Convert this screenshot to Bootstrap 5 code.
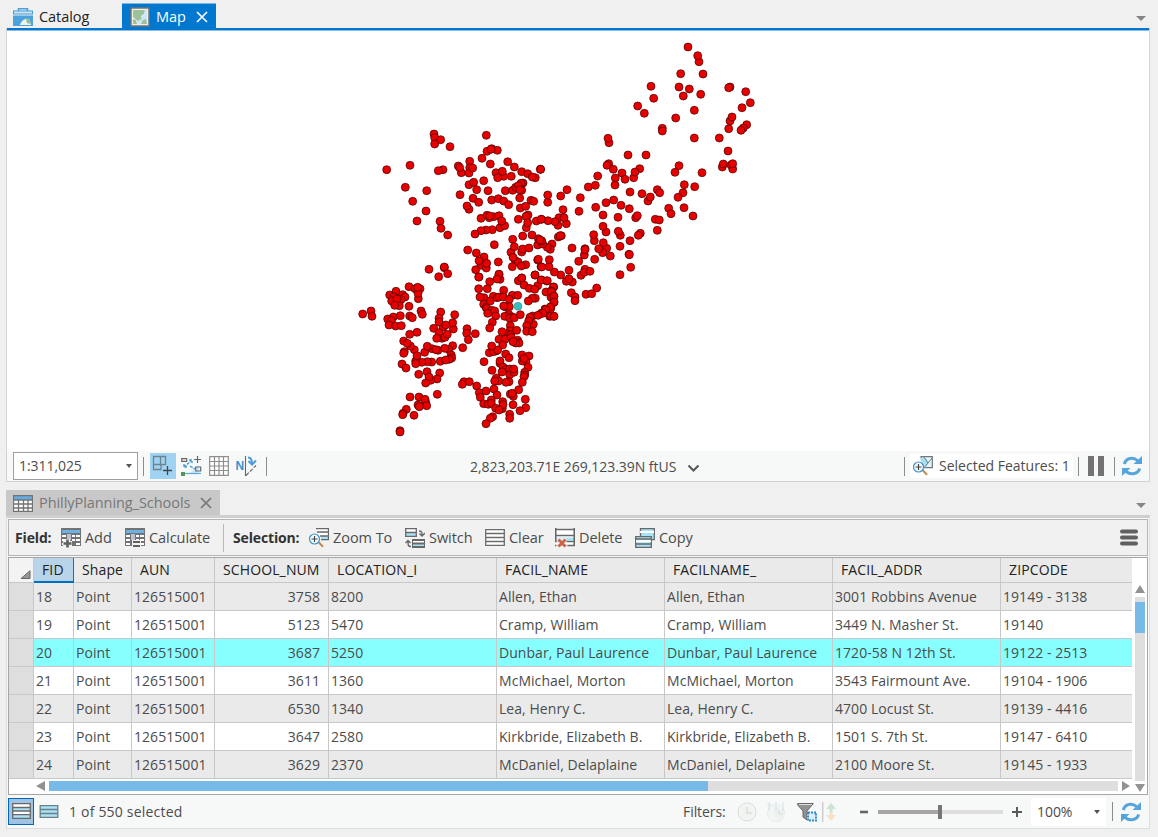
<!DOCTYPE html>
<html lang="en">
<head>
<meta charset="utf-8">
<meta name="viewport" content="width=device-width, initial-scale=1">
<title>Map</title>
<link href="https://cdn.jsdelivr.net/npm/bootstrap@5.3.0/dist/css/bootstrap.min.css" rel="stylesheet">
<style>
body{width:1158px;height:837px;overflow:hidden;background:#f0f0f0;color:#4c4c4c;font:14px/20px "Open Sans","Noto Sans",sans-serif;letter-spacing:-.06px;white-space:nowrap}
svg{display:block;flex:none}
.view{margin:0 8px 0 6px}
.tabs{height:28px;padding-top:3px}
.doc-tab{height:25px;font-size:14.5px;gap:6px;padding-top:2px}
.cat-tab{width:116px;padding-left:7px;color:#222}
.map-tab{width:94px;padding-left:8px;background:#0078d0;color:#fff;border-top:1px solid #7ab8e6}
.tabs .caret{margin:5px 4px 0 auto}
.map-area{height:454px;border:1px solid #d0d2d3;border-top:0;background:#fff;padding-top:3px;box-shadow:inset 0 2px #0078d0,inset 0 3px #8abce4}
.map-canvas{height:420px}
.map-bar{height:30px;background:#f7f9f8;display:grid;align-items:center;grid-template-columns:6px 125px 5px 7px 31px 28px 27px 30px 204px 217px 217px 6px 163px 5px 10px 26px 8px auto}
.vline{width:1px;height:19px;background:#8c8c8c}
.scale-box{height:28px;border:1px solid #a0a0a0;background:#fff;padding:0 5px}
.tool-on{width:26px;height:26px;background:#a0d3f2}
.coords{letter-spacing:-.04px;padding-top:2px}
.sel-box{height:24px;background:#fff;padding-left:3px;gap:6px;letter-spacing:0}
.table-tab{width:214px;height:25px;background:#c8c8c8;color:#777;padding-left:7px;margin-top:8px;font-size:14.5px;gap:6px;padding-top:1px}
.caret-low{margin:13px 4px 0 0}
.table-panel{border:1px solid #dcdfdf;border-top:3px solid #cfcfcf;background:#f7f9f8;height:314px;padding:1px 1px 0}
.cmd-bar{height:37px;border:1px solid #b4b4b4;background:#f1f1f1;display:grid;align-items:center;grid-template-columns:6px 46px 64px 98px 10px 76px 96px 80px 70px 80px 485px auto;font-size:14.5px}
.cmd-bar .vline{height:28px;background:#bbb}
.cmd{gap:4px}
.cmd-label{font-size:14px;letter-spacing:-.15px;color:#333}
.grid-box{height:238px;margin-top:1px;border:1px solid #a5a5a5;background:#fff}
.grid-top{height:221px}
.attr{width:1123px;table-layout:fixed;border-collapse:separate;border-spacing:0;letter-spacing:.05px}
.attr th,.attr td{border-right:1px solid #c8c8c8;border-bottom:1px solid #c8c8c8;padding:0 0 0 2px;height:28px;overflow:hidden;font-weight:400;line-height:26px}
.attr th{height:25px;line-height:24px;background:#eaeaea;padding-left:8px;color:#222;letter-spacing:.12px}
.attr th:last-child,.attr td:last-child{border-right:0}
.attr tr:nth-child(odd) td{background:#eaeaea}
.attr tr.picked td{background:#87ffff}
.attr tr td:first-child{background:#dedede}
.attr th.corner{background:#f3f3f3;padding:9px 0 0 11px}
.attr th.sorted{background:#b9d3e9;border-right:1px solid #0078d0;border-bottom:2px solid #0070c0;line-height:23px}
.attr td.num{text-align:right;padding-right:8px}
.vscroll{width:15px;padding:27px 2px 0 3px}
.vtrack{width:10px;height:184px;margin-top:4px;background:#dedede;padding-top:5px}
.vthumb{height:31px;background:#77bae7}
.hscroll{height:15px;padding:2px 0 0 27px}
.htrack{width:1069px;height:10px;background:#dedede;margin:0 4px}
.hthumb{width:659px;height:10px;background:#77bae7}
.foot{height:33px;display:grid;align-items:center;grid-template-columns:31px 30px 614px 54px 29px 31px 25px 38px 18px 125px 9px 19px 75px 6px 9px auto}
.mode-on{width:26px;height:27px;background:#9fc3e4;border:1px solid #0067b8;padding:4px 3px}
.zoom-box{height:28px;background:#fff;padding:0 6px}
.count{letter-spacing:.2px}
</style>
</head>
<body>
<svg width="0" height="0" class="position-absolute">
<defs>
<symbol id="refresh" viewBox="0 0 20 20"><path d="M2.300 8C4 2 11 .5 16 5" fill="none" stroke="#55a4dc" stroke-width="3"/><path d="M20 0v8h-8.500z" fill="#55a4dc"/><path d="M17.700 12.500C16 18 9 19.500 4 15.500" fill="none" stroke="#55a4dc" stroke-width="3"/><path d="M0 20v-8h8.500z" fill="#55a4dc"/></symbol>
<symbol id="x" viewBox="0 0 12 12"><path d="M1 1l10 10M11 1L1 11" stroke="currentColor" stroke-width="1.700" fill="none"/></symbol>
<symbol id="grid-s" viewBox="0 0 20 17"><path d="M.5.5h19v16H.5z" fill="#fff"/><path d="M1 1h18v4H1z" fill="#66abe0"/><path d="M.5.5h19v16H.5zM1 5h18M1 9h18M1 13h18M5.500 5v11M10.500 5v11M15 5v11" fill="none" stroke="#737373" stroke-width="1.300"/></symbol>
<symbol id="field" viewBox="0 0 20 20"><path d="M0 0h20v18H0z" fill="#737373"/><path d="M1 2h18v3H1z" fill="#68b2e6"/><path d="M1 7h4v2H1zM1 11h4v2H1zM1 15h4v2H1zM11 7h3v2h-3zM15 7h4v2h-4zM15 11h4v2h-4zM15 15h4v2h-4zM11 11h3v2h-3z" fill="#fff"/><path d="M6 6h4v6H6z" fill="#c4bbd4"/></symbol>
<symbol id="magnify" viewBox="0 0 20 20"><path d="M9.500 14l4.500 4.800" stroke="#c2894e" stroke-width="2"/><circle cx="5.500" cy="11" r="5" fill="#f8fcff" stroke="#3e91cc" stroke-width="1.200"/><path d="M2.500 11h6M5.500 8v6" stroke="#444" stroke-width="1.200"/></symbol>
</defs>
</svg>

<section class="view">
  <div class="tabs d-flex">
    <div class="doc-tab cat-tab d-flex align-items-center">
      <svg width="20" height="18" viewBox="0 0 20 18"><path d="M5.500 3V.8h9V3" fill="none" stroke="#4b9ed7" stroke-width="1.500"/><path d="M0 2.500h20v4H0z" fill="#4299d4"/><path d="M1 3.500h18v2H1z" fill="#cfe8f8"/><path d="M0 7.500h20V18H0z" fill="#4ba2dc"/><path d="M7 17c1-4 5-7 9-6 1 2 2 4 2 6z" fill="#eef3ec"/><path d="M13 11h3l2 5-4-1z" fill="#93bd8c"/></svg>
      <span>Catalog</span>
    </div>
    <div class="doc-tab map-tab d-flex align-items-center">
      <svg width="20" height="20" viewBox="0 0 20 20"><path d="M1 1h18v18H1z" fill="#f4efe4" stroke="#737373" stroke-width="1.500"/><path d="M3 3h12l-1 4-3 2 1 4-3 2-6-5z" fill="#9bc29a"/><path d="M15 3h2v12h-4l-2 2H7l2-4 3-1-1-3 3-2z" fill="#cfe6f8"/><path d="M3 12l3 1 1 4H3zM13 13l3-1 1 5h-6z" fill="#9bc29a"/></svg>
      <span>Map</span><svg width="12" height="12" class="ms-1"><use href="#x"/></svg>
    </div>
    <svg class="caret align-self-center" width="10" height="5"><path d="M0 0h10L5 5z" fill="#858585"/></svg>
  </div>
  <div class="map-area">
    <svg id="schools" class="map-canvas" width="1142" height="420" viewBox="7 31 1142 420"></svg>
    <div class="map-bar">
      <span></span>
      <div class="scale-box d-flex align-items-center justify-content-between"><span>1:311,025</span><svg width="6" height="4"><path d="M0 0h6L3 4z" fill="#555"/></svg></div>
      <span></span><i class="vline"></i>
      <div class="tool-on"><svg width="26" height="26" fill="none"><path d="M3.500 3.500h12v8H11v5H3.500zM3.500 11.500h8M10.500 3.500v8" stroke="#6c8290" stroke-width="1.300"/><path d="M13 17.500h9M17.500 13v9" stroke="#444" stroke-width="1.300"/></svg></div>
      <svg width="21" height="20" fill="none"><path d="M9 17l9-8v8z" fill="#cfe7f8"/><path d="M4 17.500h16" stroke="#58aadf" stroke-width="1.200"/><path d="M.7 2.700h5v2.600h-5zM14.700 11h5v4h-5z" stroke="#666" stroke-width="1.200"/><path d="M16.500 0v7M13 3.500h7" stroke="#666" stroke-width="1.200"/><path d="M3 11l7-6M3 8v3h3M8 4h3v3M9 10l5 3" stroke="#479ed7" stroke-width="1.400" stroke-dasharray="3 1"/><path d="M0 16h4v4H0z" fill="#549458"/></svg>
      <svg width="20" height="20"><path d="M.7.7h18.600v18.600H.7z" fill="#fff"/><path d="M.7.7h18.600v18.600H.7zM5.500 0v20M10 0v20M14.500 0v20M0 5.500h20M0 10h20M0 14.500h20" fill="none" stroke="#8e8e8e" stroke-width="1.200"/></svg>
      <svg width="21" height="20" fill="none"><text x="-.5" y="13.500" font-family="Liberation Sans, sans-serif" font-weight="700" font-size="12" fill="#3b91cd">N</text><path d="M9.500 0v20" stroke="#666" stroke-width="1.100"/><path d="M10 19.500L20 9.500" stroke="#666" stroke-width="1.100" stroke-dasharray="4 1.500"/><path d="M12 1.500c3 0 4 2 4 6M12.500 5l3.500 3.500 4-4" stroke="#489fd8" stroke-width="2"/></svg>
      <i class="vline"></i>
      <div class="coords">2,823,203.71E 269,123.39N ftUS</div>
      <svg width="13" height="9" class="mt-1"><path d="M1.500 1.500l5 5 5-5" fill="none" stroke="#555" stroke-width="2"/></svg>
      <i class="vline"></i>
      <div class="sel-box d-flex align-items-center"><svg width="20" height="20"><path d="M8 .7h11.300v11H11z" fill="#e9f2f6" stroke="#6b7880" stroke-width="1.200"/><path d="M7 2h6l3 5-5 6z" fill="#a9e0f0"/><path d="M11 1l4 6 4-5M15 7l-4 5" fill="none" stroke="#71838b"/><use href="#magnify" width="20" height="20"/></svg><span>Selected Features: 1</span></div>
      <span></span><i class="vline"></i>
      <svg width="16" height="20"><path d="M0 0h6v20H0zM10 0h6v20h-6z" fill="#737373"/></svg>
      <i class="vline"></i>
      <svg width="20" height="20"><use href="#refresh"/></svg>
    </div>
  </div>
</section>

<section class="view">
  <div class="d-flex justify-content-between">
    <div class="table-tab d-flex align-items-center"><svg width="20" height="17"><use href="#grid-s"/></svg><span>PhillyPlanning_Schools</span><svg width="12" height="12" class="ms-auto me-2"><use href="#x"/></svg></div>
    <svg class="caret-low align-self-center" width="10" height="5"><path d="M0 0h10L5 5z" fill="#858585"/></svg>
  </div>
  <div class="table-panel">
    <div class="cmd-bar">
      <span></span><b class="cmd-label">Field:</b>
      <div class="cmd d-flex align-items-center"><svg width="20" height="20"><use href="#field"/><path d="M2 15.500h9M6.500 11v9" stroke="#f1f1f1" stroke-width="5"/><path d="M2.500 15.500h8M6.500 11.500v8" stroke="#5f5f5f" stroke-width="2.600"/></svg><span>Add</span></div>
      <div class="cmd d-flex align-items-center"><svg width="20" height="20"><use href="#field"/><path d="M7 12h9v8H7z" fill="#f1f1f1"/><path d="M8 14h7M8 18h7" stroke="#5f5f5f" stroke-width="2"/></svg><span>Calculate</span></div>
      <i class="vline"></i><b class="cmd-label">Selection:</b>
      <div class="cmd d-flex align-items-center"><svg width="20" height="20"><path d="M7.500.7h12v11H11z" fill="#fff"/><path d="M12 8h7v3h-7z" fill="#a8e3f6"/><path d="M7 .7h12.500v11H12M8 4h11M11 8h8" fill="none" stroke="#686868" stroke-width="1.300"/><use href="#magnify" width="20" height="20"/></svg><span>Zoom To</span></div>
      <div class="cmd d-flex align-items-center"><svg width="20" height="20" fill="none"><path d="M.7.7h10.600v7.600H.7z" fill="#fff"/><path d="M1 4.500h10v3.500H1z" fill="#a8e3f6"/><path d="M.7.7h10.600v7.600H.7zM1 4.500h10" stroke="#686868" stroke-width="1.300"/><path d="M7 11h13v9H7z" fill="#686868"/><path d="M8 13h11v1.500H8z" fill="#fff"/><path d="M8 16.500h11V18H8z" fill="#a8e3f6"/><path d="M14 3c3 0 3 1 3 5M14.500 5.500L17 8l3-3M6 18.500c-3 0-3-1-3-6M.5 15L3 12.500 5.500 15" stroke="#686868" stroke-width="1.400"/></svg><span>Switch</span></div>
      <div class="cmd d-flex align-items-center"><svg width="20" height="17"><path d="M.7.7h18.600v15.600H.7zM1 4.500h18M1 8.500h18M1 12.500h18" fill="#fff" stroke="#6c6c6c" stroke-width="1.300"/></svg><span>Clear</span></div>
      <div class="cmd d-flex align-items-center"><svg width="20" height="20"><path d="M.7.7h18.600v17H.7z" fill="#fff"/><path d="M1 9.500h18v3H1z" fill="#a8e3f6"/><path d="M0 1.500h20M0 7.500h20M0 13.500h20M0 17.500h20M.7 0v14M19.300 0v18" stroke="#686868" stroke-width="1.700"/><path d="M2 10h9l2 10H1z" fill="#f1f1f1" opacity=".75"/><path d="M3.500 11.500l7 7M10.500 11.500l-7 7" stroke="#cf6246" stroke-width="2.700"/></svg><span>Delete</span></div>
      <div class="cmd d-flex align-items-center"><svg width="20" height="20"><path d="M5.500.7h13.800v11H5.500z" fill="#a8e3f6" stroke="#686868" stroke-width="1.300"/><path d="M5 4h14" stroke="#fff" stroke-width="2"/><path d="M.7 8.700h15.600v10.600H.7z" fill="#a8e3f6" stroke="#686868" stroke-width="1.300"/><path d="M0 11h17M0 16h17" stroke="#686868" stroke-width="1.500"/><path d="M1 13.200h15" stroke="#fff" stroke-width="2"/></svg><span>Copy</span></div>
      <svg width="20" height="17"><path d="M2 2.500h14M2 8.500h14M2 14.500h14" stroke="#606060" stroke-width="4" stroke-linecap="round"/></svg>
    </div>
    <div class="grid-box">
      <div class="grid-top d-flex">
        <table class="attr">
          <colgroup><col width="25"><col width="40"><col width="58"><col width="83"><col width="114"><col width="168"><col width="168"><col width="168"><col width="168"><col width="131"></colgroup>
          <thead><tr><th class="corner"><svg width="11" height="9"><path d="M10 .8v7.700H1z" fill="#969696" stroke="#666"/></svg></th><th class="sorted">FID</th><th>Shape</th><th>AUN</th><th>SCHOOL_NUM</th><th>LOCATION_I</th><th>FACIL_NAME</th><th>FACILNAME_</th><th>FACIL_ADDR</th><th>ZIPCODE</th></tr></thead>
          <tbody id="rows"></tbody>
        </table>
        <div class="vscroll"><svg width="10" height="8"><path d="M0 8h10L5 0z" fill="#929292"/></svg><div class="vtrack"><div class="vthumb"></div></div></div>
      </div>
      <div class="hscroll d-flex align-items-start">
        <svg width="9" height="10"><path d="M9 0v10L0 5z" fill="#929292"/></svg>
        <div class="htrack"><div class="hthumb"></div></div>
        <svg width="9" height="10"><path d="M0 0v10l8-5z" fill="#929292"/></svg>
        <svg width="10" height="11" class="ms-1"><path d="M0 3h10l-5 8z" fill="#929292"/></svg>
      </div>
    </div>
    <div class="foot">
      <div class="mode-on"><svg width="19" height="17"><path d="M.7.7h17.600v14.600H.7z" fill="#fff"/><path d="M1 5h17v3H1zM1 12h17v3H1z" fill="#a8e3f6"/><path d="M.7.7h17.600v14.600H.7zM1 4.500h17M1 8h17M1 11.700h17" fill="none" stroke="#686868" stroke-width="1.300"/></svg></div>
      <svg width="20" height="13"><path d="M1.200.7h17.600v11.600H1.200zM1 4.500h18M1 8.500h18" fill="#a8e3f6" stroke="#6c7f86" stroke-width="1.300"/></svg>
      <span class="count">1 of 550 selected</span>
      <span>Filters:</span>
      <svg width="20" height="20" class="opacity-25"><circle cx="10" cy="10" r="9" fill="#eee" stroke="#858585"/><circle cx="10" cy="10" r="6.500" fill="#dce8da"/><path d="M10 5v6h5" stroke="#9aab95" stroke-width="2" fill="none"/></svg>
      <svg width="20" height="20" class="opacity-25"><circle cx="10" cy="11" r="8.500" fill="#eee" stroke="#858585" stroke-dasharray="1.500 1.500"/><circle cx="13" cy="12" r="5.500" fill="#cfe3ce"/><path d="M3 0v9M10 0v9M17 0v9M1 3h4M8 6h4" stroke="#65a1c0"/><path d="M13 8v4h4" stroke="#888" fill="none"/></svg>
      <svg width="20" height="20"><path d="M.7 1.500h15.600L10 9v9l-4-3V9L.7 3z" fill="#929292" stroke="#666"/><path d="M2 2.500h13" stroke="#ddd"/><path d="M10 9h10v11H10z" fill="#f7f9f8"/><path d="M11 10.500h8v8h-8z" fill="#d9edfa" stroke="#328bce" stroke-width="2" stroke-dasharray="2 1"/></svg>
      <svg width="16" height="20"><path d="M.8 0v20" stroke="#bababa"/><path d="M9 1l5 6h-3.500v3h-3V7H4z" fill="#cce3cf"/><path d="M9 19l5-6h-3.500v-3h-3v3H4z" fill="#f8dfc7"/></svg>
      <svg width="9" height="9"><path d="M0 5h8" stroke="#666" stroke-width="2.600"/></svg>
      <svg width="125" height="14"><path d="M0 7h62" stroke="#a6a6a6" stroke-width="4"/><path d="M62 7h63" stroke="#dedede" stroke-width="4"/><path d="M62 0v14" stroke="#777" stroke-width="4"/></svg>
      <span></span>
      <svg width="10" height="10"><path d="M0 5h10M5 0v10" stroke="#5b5b5b" stroke-width="2"/></svg>
      <div class="zoom-box d-flex align-items-center justify-content-between"><span>100%</span><svg width="6" height="4"><path d="M0 0h6L3 4z" fill="#555"/></svg></div>
      <span></span><i class="vline"></i>
      <svg width="20" height="20"><use href="#refresh"/></svg>
    </div>
  </div>
</section>

<script src="https://cdn.jsdelivr.net/npm/bootstrap@5.3.0/dist/js/bootstrap.bundle.min.js"></script>
<script>
// Attribute rows: FID, SCHOOL_NUM, LOCATION_I, name, address, zip
const records = [
  [18,3758,8200,"Allen, Ethan","3001 Robbins Avenue","19149 - 3138"],
  [19,5123,5470,"Cramp, William","3449 N. Masher St.","19140"],
  [20,3687,5250,"Dunbar, Paul Laurence","1720-58 N 12th St.","19122 - 2513"],
  [21,3611,1360,"McMichael, Morton","3543 Fairmount Ave.","19104 - 1906"],
  [22,6530,1340,"Lea, Henry C.","4700 Locust St.","19139 - 4416"],
  [23,3647,2580,"Kirkbride, Elizabeth B.","1501 S. 7th St.","19147 - 6410"],
  [24,3629,2370,"McDaniel, Delaplaine","2100 Moore St.","19145 - 1933"]
];
document.getElementById("rows").innerHTML = records.map(r =>
  `<tr class="${r[0] === 20 ? "picked" : ""}"><td></td><td>${r[0]}</td><td>Point</td><td>126515001</td><td class="num">${r[1]}</td><td>${r[2]}</td><td>${r[3]}</td><td>${r[3]}</td><td>${r[4]}</td><td>${r[5]}</td></tr>`).join("");

// School locations by district: origin, then offsets in thirds of a map unit
const districts = [
[350,120,"252,42 254,53 272,59 254,72 300,80 409,46 180,136 110,149 279,149 265,152 166,202 230,212 188,244 228,273 201,303 270,304 273,325 293,345 237,448 283,443 283,441 266,470 293,461 425,86 411,94 442,91 423,88 396,115 421,132 473,125 493,141 359,124 325,138 334,158 329,143 359,143 357,159 368,144 515,155 533,161 556,173 547,171 571,148 438,158 461,169 457,154 443,173 484,169 401,182 357,194 371,187 380,209 330,224 414,212 466,212 488,211 497,202 519,189 513,190 505,197 515,211 509,209 509,234 369,235 386,247 357,268 351,258 425,240 445,236 461,243 476,254 511,264 527,259 543,241 551,244 393,295 411,286 431,290 418,293 419,288 447,287 450,323 464,317 455,303 427,329 408,330 393,332 375,342 433,374 353,390 379,399 402,411 393,436 409,444 410,430 387,422 377,449 387,471 445,426 447,463 505,298 534,285 528,289 529,323 533,308 559,303 574,298 518,348 546,345 488,358 483,397 493,380 496,422 504,426 489,412 487,440 527,434 514,438 515,396 518,387 537,384 574,362 571,370 565,356 563,375 555,465 515,474 563,420 565,418 573,440"],
[540,140,"264,45 318,45 206,71 201,76 220,88 173,108 246,99 255,118 226,114 225,135 299,86 281,113 285,96 417,77 405,97 486,98 433,134 464,140 429,158 414,172 2,88 81,149 62,168 23,187 23,165 69,209 57,233 54,256 79,251 72,233 45,245 24,242 4,238 121,173 145,141 166,136 117,214 167,202 198,188 221,180 243,196 268,206 189,225 234,232 287,233 292,227 270,156 306,161 352,149 359,158 324,183 331,171 386,205 393,221 432,203 459,228 346,238 358,240 352,271 198,276 189,259 163,302 161,284 241,286 235,274 301,280 295,286 270,302 240,319 200,325 188,338 190,308 176,326 211,348 267,343 268,344 272,382 240,404 133,345 135,326 135,329 96,324 116,364 164,358 135,388 123,406 133,397 150,394 87,391 97,426 79,424 87,416 62,405 43,396 27,380 28,359 5,381 20,423 5,420 55,291 64,287 60,287 36,312 31,328 22,322 8,312 5,303 0,300 41,441 18,456 36,457 33,472 41,469 42,487 33,500 15,507 4,520 31,508 29,529 41,529 94,458 105,471 105,482 138,463 155,461 170,444"],
[540,35,"444,36 477,80 473,62 422,116 489,117 417,156 448,162 430,183 482,178 333,154 341,190 293,213 313,235 407,249 463,226 463,309 570,156 566,158 617,170 631,203 606,218 570,258 576,246 566,281 620,269 610,279 603,286 367,280 367,288 538,309 564,348 207,323 204,310 547,396 550,387 573,390 578,402 578,386"],
[350,255,"63,168 38,177 66,184 177,95 195,101 210,101 205,131 204,115 203,97 138,109 119,120 131,126 158,119 165,126 125,138 153,134 141,132 148,152 134,151 177,154 213,168 217,178 179,183 187,188 151,182 130,186 113,192 124,197 117,210 137,213 154,212 201,232 179,238 272,171 314,179 267,190 251,220 310,222 279,217 308,203 287,210 267,201 267,233 276,250 285,247 292,238 260,250 308,272 224,292 246,281 232,274 264,286 258,284 297,284 284,280 304,300 305,309 298,313 271,319 287,315 245,321 232,320 215,322 197,318 193,284 201,302 181,273 161,258 172,265 163,290 161,295 197,326 156,327 168,339 206,358 231,350 269,354 261,372 242,376 237,366 227,384 262,418 180,426 207,426 227,442 225,433 230,452 204,450 208,455 169,463 159,475 158,479 192,481 150,527 150,531 351,221 350,235 376,236 355,254 338,278 342,380 337,388 358,380 380,393 388,413 408,408 391,427 401,446 386,66 450,73 447,58 441,72 419,80 386,101 412,101 402,128 390,126 430,124 421,138 401,148 408,157 410,160 425,166 413,175 434,168 437,183 427,202 419,219 461,106 441,128 447,126 460,126 487,121 478,133 503,121 465,155 478,155 461,153 476,178 464,184 485,185 479,190 493,188 481,212 511,179 480,228 500,226 473,237 456,230 482,240 447,253 465,253 484,247 503,256 507,264 497,264 489,260 458,270 438,288 418,293 430,290 443,285 425,273 467,297 477,308 402,320 450,325 450,318 426,346 459,336 468,343 456,351 479,342 479,359 492,352 491,342 439,369 446,378 434,378 477,380 468,382 432,402 441,420 424,435 415,448 424,445 458,440 457,461 459,449 437,460 447,465 490,424 481,417 487,415 506,404 489,449 526,433 527,458 510,467 479,478 479,490 428,485 421,490 408,506 505,77 515,69 522,90 538,100 563,92 554,103 573,75 592,77 555,60 556,130 547,130 535,138 610,96 603,108 604,110 612,124 612,141 600,165 601,156 587,164 578,175 548,183 564,181 540,187 550,208 536,198 530,212 530,229 547,230 603,183 612,184 516,300 537,303 528,320 517,318 522,311 534,337 524,352 524,360 522,365 517,382"]
];
const dot = (x, y, c) => `<circle cx="${x.toFixed(1)}" cy="${y.toFixed(1)}" r="4" fill="${c}"/>`;
let dots = "";
for (const [ox, oy, list] of districts)
  for (const p of list.split(" ")) { const [x, y] = p.split(","); dots += dot(ox + x / 3, oy + y / 3, "#e60000"); }
document.getElementById("schools").innerHTML =
  `<g stroke="#4b0000" stroke-width=".7">${dots}</g><g stroke="#5f8f90" stroke-width=".7">${dot(518, 306.3, "#36bdc0")}</g>`;
</script>
</body>
</html>
